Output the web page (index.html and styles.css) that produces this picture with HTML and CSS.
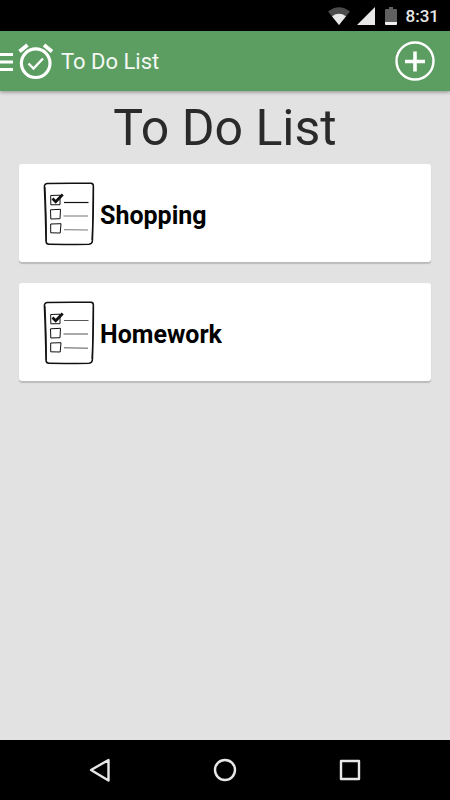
FILE: index.html
```html
<!DOCTYPE html>
<html lang="en">
<head>
<meta charset="utf-8">
<meta name="viewport" content="width=device-width, initial-scale=1">
<title>To Do List</title>
<link rel="stylesheet" href="styles.css">
</head>
<body>
<div class="status">
  <svg width="22" height="18" viewBox="0 0 22 18" aria-hidden="true">
    <path d="M0 4.500Q11-4 22 4.500L11 18Z" fill="#4b4b4b"/>
    <path d="M4 9.200Q11 4.500 18 9.200L11 18Z" fill="#e8e8e8"/>
  </svg>
  <svg width="18" height="18" viewBox="0 0 18 18" aria-hidden="true"><path d="M18 0V18H0Z" fill="#e8e8e8"/></svg>
  <svg class="battery" width="12" height="18" viewBox="0 0 12 18" aria-hidden="true">
    <path d="M4 0H8V2H11Q12 2 12 3V15H0V3Q0 2 1 2H4Z" fill="#606060"/>
    <path d="M0 15H12V17Q12 18 11 18H1Q0 18 0 17Z" fill="#f0f0f0"/>
  </svg>
  <span class="clock">8:31</span>
</div>
<header class="bar">
  <button class="menu" aria-label="Open menu">
    <svg width="13" height="20" viewBox="0 0 13 20" aria-hidden="true"><path d="M0 3.500H13M0 11H13M0 18.500H13" stroke="#fff" stroke-width="3"/></svg>
  </button>
  <svg class="logo" width="36" height="38" viewBox="0 0 36 38" fill="none" stroke="#fff" aria-hidden="true">
    <circle cx="17.700" cy="21.200" r="14.300" stroke-width="3.200"/>
    <path d="M1.500 9.500 9.500 3M26 3 34 9.500" stroke-width="3.800"/>
    <path d="M10.500 21.500 15.500 26.500 25 16.500" stroke-width="2.400"/>
  </svg>
  <span class="title">To Do List</span>
  <button class="add" aria-label="Add list">
    <svg width="40" height="40" viewBox="0 0 40 40" fill="none" stroke="#fff" aria-hidden="true">
      <circle cx="20" cy="20" r="18.500" stroke-width="2.400"/>
      <path d="M10 20.500H30M20 10.500V30.500" stroke-width="3.600"/>
    </svg>
  </button>
</header>
<main class="content">
  <h1 class="heading">To Do List</h1>
  <ul class="lists">
    <li>
      <button class="card">
        <svg width="52" height="64" viewBox="0 0 52 64" fill="none" stroke="#111" aria-hidden="true">
          <path d="M4 1.500Q25 .9 48 1.300 50.500 1.500 50.400 4.500 50.400 34 49.400 59 49.200 62 46 62.200 24 62.600 6 62.300 3 62.200 3 59 2.600 34 1.400 5Q1.200 2 4 1.500Z" stroke-width="1.500"/>
          <path d="M2 5Q3.300 28 3.400 59M50.300 5Q50 33 49 58" stroke-width="1"/>
          <path d="M7.700 13.500 17 13.200 17 22.700 7.800 22.800ZM7.500 27.800 17.500 27.300 17 36.700 7.800 37ZM7.700 42 18 41.700 17.200 51 7.700 50.800Z" stroke-width="1"/>
          <path d="M9.500 16.500 12.700 19.700 19.700 12.500" stroke-width="2.800"/>
          <path d="M21 20.500H45.500" stroke-width="1.200"/>
          <path d="M20.500 34H45M21 47.700 45 48" stroke="#777" stroke-width="1"/>
        </svg>
        <span>Shopping</span>
      </button>
    </li>
    <li>
      <button class="card">
        <svg width="52" height="64" viewBox="0 0 52 64" fill="none" stroke="#111" aria-hidden="true">
          <path d="M4 1.500Q25 .9 48 1.300 50.500 1.500 50.400 4.500 50.400 34 49.400 59 49.200 62 46 62.200 24 62.600 6 62.300 3 62.200 3 59 2.600 34 1.400 5Q1.200 2 4 1.500Z" stroke-width="1.500"/>
          <path d="M2 5Q3.300 28 3.400 59M50.300 5Q50 33 49 58" stroke-width="1"/>
          <path d="M7.700 13.500 17 13.200 17 22.700 7.800 22.800ZM7.500 27.800 17.500 27.300 17 36.700 7.800 37ZM7.700 42 18 41.700 17.200 51 7.700 50.800Z" stroke-width="1"/>
          <path d="M9.500 16.500 12.700 19.700 19.700 12.500" stroke-width="2.800"/>
          <path d="M21 19.500H45.500M20.500 33H45M21 46.800 45 47.200" stroke="#555" stroke-width="1"/>
        </svg>
        <span>Homework</span>
      </button>
    </li>
  </ul>
</main>
<nav class="nav" aria-label="System">
  <button aria-label="Back"><svg width="24" height="26" viewBox="0 0 24 26" aria-hidden="true"><path d="M20.500 3V23.500L3 13Z"/></svg></button>
  <button aria-label="Home"><svg width="24" height="24" viewBox="0 0 24 24" aria-hidden="true"><circle cx="12" cy="12" r="10"/></svg></button>
  <button aria-label="Recent apps"><svg width="22" height="22" viewBox="0 0 22 22" aria-hidden="true"><rect x="2" y="2" width="18" height="18"/></svg></button>
</nav>
</body>
</html>
```
FILE: styles.css
```css
* {
  box-sizing: border-box;
}

body {
  margin: 0;
  min-height: 100vh;
  display: flex;
  flex-direction: column;
  background: #e2e2e2;
  font-family: Roboto, "Liberation Sans", sans-serif;
}

button {
  display: flex;
  align-items: center;
  margin: 0;
  padding: 0;
  border: 0;
  background: none;
  font: inherit;
}

svg {
  display: block;
  flex: none;
}

.status {
  display: flex;
  align-items: center;
  justify-content: flex-end;
  gap: 7px;
  padding: 5px 11px 4px 0;
  background: #000;
  color: #e8e8e8;
}

.battery {
  margin: 0 2px 0 3px;
}

.clock {
  font-size: 17px;
  font-weight: 500;
  line-height: 22px;
}

.bar {
  display: flex;
  align-items: center;
  padding: 10px 15px 10px 0;
  background: #5c9e62;
  box-shadow: 0 1px 4px rgba(0, 0, 0, 0.4);
}

.logo {
  margin: 0 7px 0 5px;
}

.title {
  padding-top: 2px;
  color: #f4f8f4;
  font-size: 22px;
  line-height: 26px;
}

.add {
  margin-left: auto;
}

.content {
  flex: 1;
  padding: 7px 19px 20px;
}

.heading {
  margin: 0 0 6px;
  color: #2a2a2a;
  font-size: 50px;
  font-weight: 400;
  line-height: 60px;
  text-align: center;
}

.lists {
  display: grid;
  gap: 21px;
  margin: 0;
  padding: 0;
  list-style: none;
}

.card {
  width: 100%;
  gap: 5px;
  padding: 18px 24px 16px;
  border-radius: 3px;
  background: #fff;
  box-shadow: 0 2px 1px #bcbcbc;
  color: #000;
  font-size: 25px;
  font-weight: 700;
  line-height: 30px;
}

.card span {
  padding-top: 4px;
}

.nav {
  display: grid;
  grid-template-columns: repeat(3, 1fr);
  padding: 0 37px;
  background: #000;
}

.nav button {
  justify-content: center;
  height: 60px;
}

.nav svg {
  fill: none;
  stroke: #e8e8e8;
  stroke-width: 2.4;
  stroke-linejoin: round;
}
```
